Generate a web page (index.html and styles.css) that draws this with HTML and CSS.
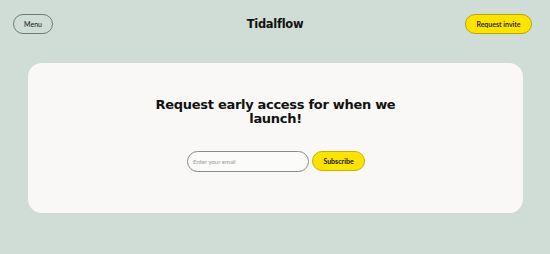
FILE: index.html
```html
<!DOCTYPE html>
<html>
<head>
<meta charset="utf-8">
<link rel="stylesheet" href="styles.css">
</head>
<body>
<header class="topbar">
  <div class="left"><button class="btn btn-outline">Menu</button></div>
  <div class="brand">Tidalflow</div>
  <div class="right"><button class="btn btn-yellow">Request invite</button></div>
</header>
<main class="card">
  <h1 class="headline">Request early access for when we launch!</h1>
  <form class="signup">
    <input class="email" type="text" placeholder="Enter your email">
    <button type="button" class="btn btn-yellow btn-sub">Subscribe</button>
  </form>
</main>
</body>
</html>
```
FILE: styles.css
```css
html, body { margin: 0; padding: 0; }
body {
  background: #cfddd6;
  width: 550px;
  height: 254px;
  font-family: "Lato", "Liberation Sans", sans-serif;
  color: #111;
}
.topbar {
  display: grid;
  grid-template-columns: 1fr auto 1fr;
  align-items: center;
  padding: 14px 18px 0 13px;
  height: 20px;
}
.left { display: flex; justify-content: flex-start; }
.right { display: flex; justify-content: flex-end; }
.btn {
  font-family: "Lato", sans-serif;
  font-size: 7px;
  border-radius: 999px;
  height: 20px;
  padding: 0;
  cursor: pointer;
  color: #111;
}
.btn-outline {
  width: 40px;
  background: transparent;
  border: 1px solid #6e7a75;
}
.btn-yellow {
  width: 67px;
  background: #fde400;
  border: 1px solid #b9a600;
  font-weight: 600;
}
.brand {
  font-family: "DejaVu Sans", sans-serif;
  font-weight: bold;
  font-size: 11.5px;
  letter-spacing: -0.3px;
  margin-left: 5px;
}
.card {
  margin: 29px 27px 0 28px;
  height: 150px;
  background: #f9f8f6;
  border-radius: 14px;
  display: flex;
  flex-direction: column;
  align-items: center;
}
.headline {
  margin: 35px 0 0 0;
  width: 250px;
  text-align: center;
  font-family: "DejaVu Sans", sans-serif;
  font-weight: bold;
  font-size: 13px;
  line-height: 13.5px;
  letter-spacing: -0.3px;
}
.signup {
  display: flex;
  gap: 3px;
  margin-top: 26px;
  margin-left: 1px;
}
.email {
  box-sizing: border-box;
  width: 122px;
  height: 21px;
  border-radius: 999px;
  border: 1px solid #8a8a8a;
  background: #fbfbfa;
  padding: 0 0 0 5px;
  font-family: "Lato", sans-serif;
  font-size: 6px;
  outline: none;
}
.email::placeholder { color: #9a9a9a; }
.btn-sub {
  width: 53px;
  height: 20px;
  font-size: 7px;
  font-weight: 700;
  border-color: #c8b300;
}
```
